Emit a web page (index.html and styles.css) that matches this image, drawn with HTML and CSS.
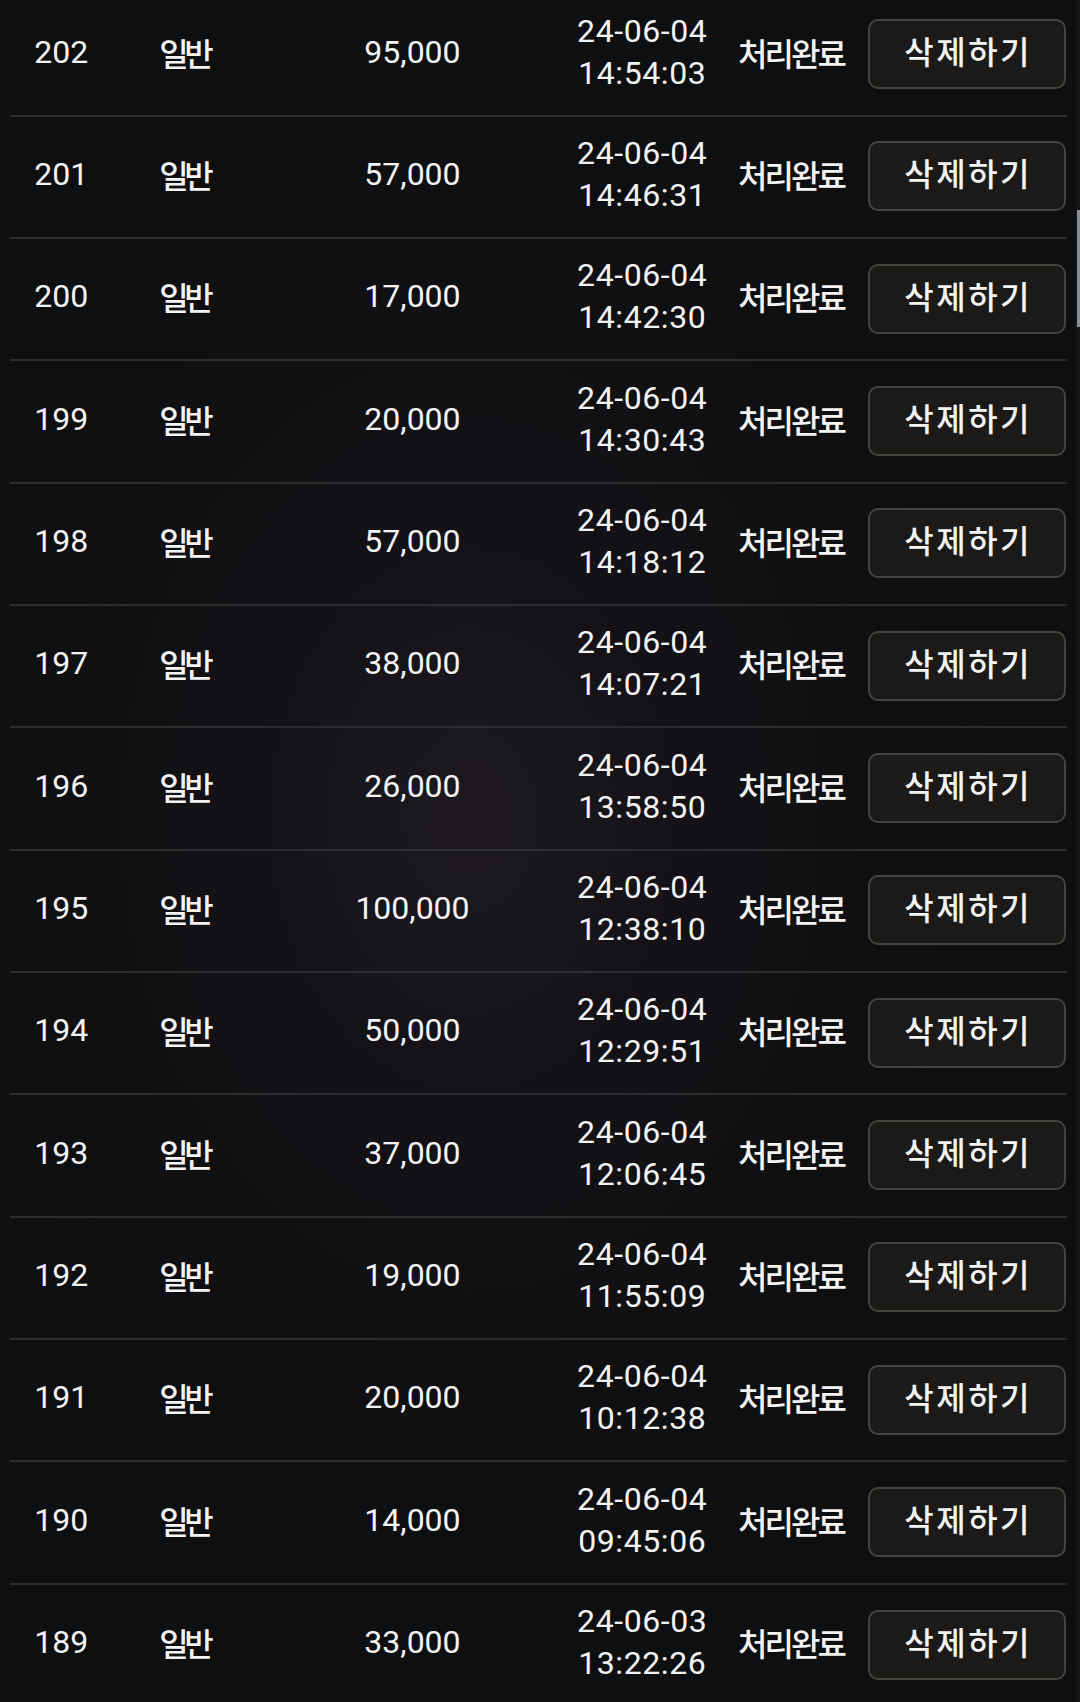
FILE: index.html
```html
<!DOCTYPE html>
<html lang="ko">
<head>
<meta charset="utf-8">
<title>내역</title>
<link rel="stylesheet" href="styles.css">
</head>
<body>
<div class="list">
  <div class="row"><span class="no">202</span><span class="type ko">일반</span><span class="amt">95,000</span><span class="date">24-06-04<br>14:54:03</span><span class="status ko">처리완료</span><span class="act"><button class="del">삭제하기</button></span></div>
  <div class="row"><span class="no">201</span><span class="type ko">일반</span><span class="amt">57,000</span><span class="date">24-06-04<br>14:46:31</span><span class="status ko">처리완료</span><span class="act"><button class="del">삭제하기</button></span></div>
  <div class="row"><span class="no">200</span><span class="type ko">일반</span><span class="amt">17,000</span><span class="date">24-06-04<br>14:42:30</span><span class="status ko">처리완료</span><span class="act"><button class="del">삭제하기</button></span></div>
  <div class="row"><span class="no">199</span><span class="type ko">일반</span><span class="amt">20,000</span><span class="date">24-06-04<br>14:30:43</span><span class="status ko">처리완료</span><span class="act"><button class="del">삭제하기</button></span></div>
  <div class="row"><span class="no">198</span><span class="type ko">일반</span><span class="amt">57,000</span><span class="date">24-06-04<br>14:18:12</span><span class="status ko">처리완료</span><span class="act"><button class="del">삭제하기</button></span></div>
  <div class="row"><span class="no">197</span><span class="type ko">일반</span><span class="amt">38,000</span><span class="date">24-06-04<br>14:07:21</span><span class="status ko">처리완료</span><span class="act"><button class="del">삭제하기</button></span></div>
  <div class="row"><span class="no">196</span><span class="type ko">일반</span><span class="amt">26,000</span><span class="date">24-06-04<br>13:58:50</span><span class="status ko">처리완료</span><span class="act"><button class="del">삭제하기</button></span></div>
  <div class="row"><span class="no">195</span><span class="type ko">일반</span><span class="amt">100,000</span><span class="date">24-06-04<br>12:38:10</span><span class="status ko">처리완료</span><span class="act"><button class="del">삭제하기</button></span></div>
  <div class="row"><span class="no">194</span><span class="type ko">일반</span><span class="amt">50,000</span><span class="date">24-06-04<br>12:29:51</span><span class="status ko">처리완료</span><span class="act"><button class="del">삭제하기</button></span></div>
  <div class="row"><span class="no">193</span><span class="type ko">일반</span><span class="amt">37,000</span><span class="date">24-06-04<br>12:06:45</span><span class="status ko">처리완료</span><span class="act"><button class="del">삭제하기</button></span></div>
  <div class="row"><span class="no">192</span><span class="type ko">일반</span><span class="amt">19,000</span><span class="date">24-06-04<br>11:55:09</span><span class="status ko">처리완료</span><span class="act"><button class="del">삭제하기</button></span></div>
  <div class="row"><span class="no">191</span><span class="type ko">일반</span><span class="amt">20,000</span><span class="date">24-06-04<br>10:12:38</span><span class="status ko">처리완료</span><span class="act"><button class="del">삭제하기</button></span></div>
  <div class="row"><span class="no">190</span><span class="type ko">일반</span><span class="amt">14,000</span><span class="date">24-06-04<br>09:45:06</span><span class="status ko">처리완료</span><span class="act"><button class="del">삭제하기</button></span></div>
  <div class="row"><span class="no">189</span><span class="type ko">일반</span><span class="amt">33,000</span><span class="date">24-06-03<br>13:22:26</span><span class="status ko">처리완료</span><span class="act"><button class="del">삭제하기</button></span></div>
</div>
<div class="scroll-track"></div>
<div class="scroll-thumb"></div>
</body>
</html>
```

FILE: styles.css
```css
html, body {
  margin: 0;
  padding: 0;
}
body {
  width: 1080px;
  height: 1702px;
  overflow: hidden;
  background-color: #0e0f10;
  background-image: radial-gradient(ellipse 520px 700px at 470px 820px, rgba(32, 26, 36, 0.85) 0%, rgba(22, 19, 25, 0.6) 45%, rgba(14, 15, 16, 0) 100%);
  color: #f3f3f3;
  font-family: Roboto, "Noto Sans CJK KR", sans-serif;
  font-size: 32px;
}
.list {
  margin-top: -5.65px;
  padding-left: 10px;
  width: 1057px;
}
.row {
  display: grid;
  grid-template-columns: 102.6px 148.2px 303.4px 155.6px 148.4px 198px;
  align-items: center;
  height: 120.35px;
  box-sizing: content-box;
  border-bottom: 2px solid #2d2d2f;
}
.row > span {
  text-align: center;
  line-height: 40px;
  position: relative;
  top: -3px;
}
.ko {
  font-family: "Noto Sans CJK KR", sans-serif;
  font-weight: 500;
}
.type {
  letter-spacing: -4.5px;
  padding-right: 5px;
}
.status {
  letter-spacing: -3px;
  padding-right: 6px;
}
.row > span.date {
  line-height: 42px;
  letter-spacing: 0.6px;
  padding-left: 0.6px;
}
.act {
  display: flex;
  justify-content: flex-start;
}
.row > span.act {
  top: -0.5px;
}
.del {
  width: 198px;
  height: 70px;
  box-sizing: border-box;
  background: #1c1a18;
  border: 2px solid #46433f;
  border-radius: 10px;
  color: #f3f3f3;
  font-family: "Noto Sans CJK KR", sans-serif;
  font-weight: 500;
  font-size: 32px;
  letter-spacing: 2.5px;
  padding: 0 0 8px 2px;
  line-height: 1;
}
.scroll-track {
  position: fixed;
  right: 0;
  top: 0;
  width: 4px;
  height: 1702px;
  background: rgba(255, 255, 255, 0.03);
}
.scroll-thumb {
  position: fixed;
  right: 0;
  top: 210px;
  width: 3.5px;
  height: 117px;
  background: #8a8d91;
}
```
